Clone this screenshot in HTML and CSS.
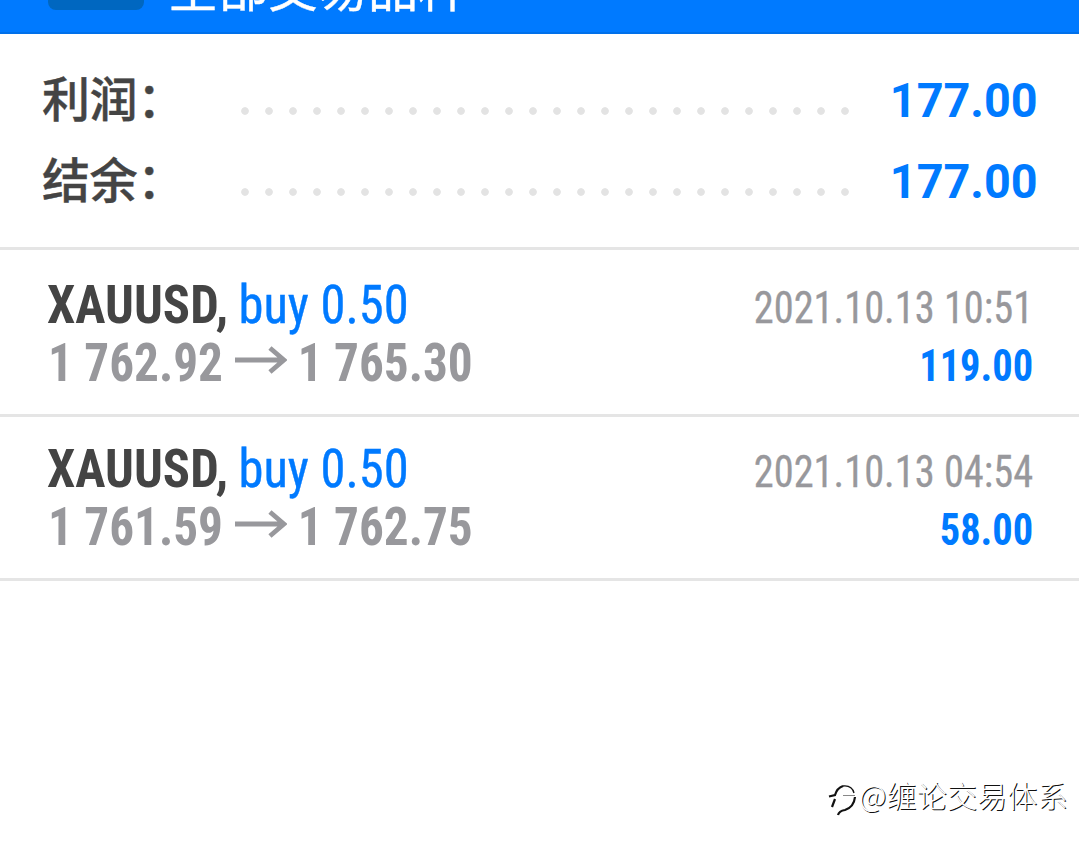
FILE: index.html
```
<!DOCTYPE html>
<html lang="zh-CN">
<head>
<meta charset="UTF-8">
<meta name="viewport" content="width=device-width, initial-scale=1.0">
<title>交易历史</title>
<link rel="stylesheet" href="styles.css">
</head>
<body>
<header class="header">
  <div class="header-icon"></div>
  <h1>全部交易品种</h1>
</header>

<section class="summary">
  <div class="summary-row">
    <span class="label">利润：</span>
    <span class="dots"></span>
    <span class="total">177.00</span>
  </div>
  <div class="summary-row">
    <span class="label">结余：</span>
    <span class="dots"></span>
    <span class="total">177.00</span>
  </div>
</section>

<main>
  <div class="deal">
    <div class="deal-info">
      <div class="line"><b class="symbol">XAUUSD,</b><span class="type">buy 0.50</span></div>
      <div class="line prices">
        <span>1 762.92</span>
        <svg class="arrow" width="57" height="28" viewBox="0 0 52 28" preserveAspectRatio="none"><path d="M0 14H49M35 2L49 14L35 26" fill="none" stroke="#98989c" stroke-width="4.8"/></svg>
        <span>1 765.30</span>
      </div>
    </div>
    <div class="deal-result">
      <span class="time">2021.10.13 10:51</span>
      <span class="profit">119.00</span>
    </div>
  </div>
  <div class="deal">
    <div class="deal-info">
      <div class="line"><b class="symbol">XAUUSD,</b><span class="type">buy 0.50</span></div>
      <div class="line prices">
        <span>1 761.59</span>
        <svg class="arrow" width="57" height="28" viewBox="0 0 52 28" preserveAspectRatio="none"><path d="M0 14H49M35 2L49 14L35 26" fill="none" stroke="#98989c" stroke-width="4.8"/></svg>
        <span>1 762.75</span>
      </div>
    </div>
    <div class="deal-result">
      <span class="time">2021.10.13 04:54</span>
      <span class="profit">58.00</span>
    </div>
  </div>
</main>

<div class="watermark">
  <svg width="31" height="40" viewBox="0 0 31 40">
    <g fill="none" stroke="#111" stroke-width="2.2">
      <path d="M1 19.500L7 18Q9 11 15 9"/>
      <path d="M15 9Q24 8 26 16" stroke-width="1.3"/>
      <path d="M15 18.500H27" stroke="#888" stroke-width="1"/>
      <path d="M27 20Q26 30 17 33Q11 34 10 38M7 22L4 30"/>
    </g>
  </svg>
  <span>@缠论交易体系</span>
</div>
</body>
</html>
```

FILE: styles.css
```
* {
  box-sizing: border-box;
}
body {
  margin: 0;
  height: 848px;
  overflow: hidden;
  background-color: #fff;
  font-family: Roboto, "Noto Sans CJK SC", sans-serif;
}
.header {
  display: flex;
  align-items: flex-end;
  height: 34px;
  padding-left: 48px;
  background-color: #007aff;
  border-bottom: 2px solid #0070ea;
}
.header-icon {
  width: 96px;
  height: 48px;
  margin-bottom: 22px;
  border-radius: 8px;
  background-color: #0067c0;
}
.header h1 {
  margin: 0 0 17px 24px;
  color: #fff;
  font-family: "Noto Sans CJK SC", sans-serif;
  font-size: 50px;
  font-weight: 400;
  line-height: 60px;
  -webkit-text-stroke: 0.4px #fff;
}
.summary {
  height: 216px;
  padding: 26px 42px 0;
  border-bottom: 3px solid #e5e5e5;
}
.summary-row {
  display: flex;
  align-items: center;
  height: 81px;
}
.label {
  width: 191px;
  margin-top: -9px;
  color: #444;
  font-family: "Noto Sans CJK SC", sans-serif;
  font-size: 48px;
  font-weight: 500;
  line-height: 81px;
  letter-spacing: -0.4px;
  -webkit-text-stroke: 0.4px #444;
}
.dots {
  width: 624px;
  height: 24px;
  margin-top: 21px;
  background: radial-gradient(circle, #e3e3e3 3.4px, transparent 4.2px) 0 0 / 24px 24px;
}
.total {
  margin: 0 -1px 0 auto;
  color: #007aff;
  font-size: 48px;
  font-weight: 700;
  transform: scaleX(0.975);
  transform-origin: right;
}
.deal {
  display: flex;
  justify-content: space-between;
  height: 167px;
  padding: 26px 46px 0 47px;
  border-bottom: 3px solid #e5e5e5;
  font-stretch: 75%;
}
.deal + .deal {
  height: 164px;
  padding-top: 23px;
}
/* the condensed face is squeezed a little further */
.line {
  display: flex;
  height: 58px;
  font-size: 54px;
  line-height: 58px;
  white-space: nowrap;
  transform: scaleX(0.937);
  transform-origin: left;
}
.symbol {
  color: #444;
}
.type {
  margin-left: 11px;
  color: #007aff;
  -webkit-text-stroke: 0.4px #007aff;
}
.prices {
  margin-left: 1px;
  color: #98989c;
  font-weight: 700;
  transform: scaleX(0.912);
}
.arrow {
  margin: 12px 12px 0 13px;
}
.deal-result {
  display: flex;
  flex-direction: column;
  align-items: flex-end;
  padding-top: 3px;
  font-size: 45px;
  line-height: 58px;
  transform: scaleX(0.898);
  transform-origin: right;
}
.time {
  color: #98989c;
  -webkit-text-stroke: 0.3px #98989c;
}
.profit {
  color: #007aff;
  font-weight: 700;
}
.watermark {
  position: absolute;
  left: 828px;
  top: 777px;
  display: flex;
  color: #fff;
  font-family: "Noto Sans CJK SC", sans-serif;
  font-size: 30px;
  font-weight: 300;
  line-height: 34px;
  letter-spacing: 0.2px;
  text-shadow: 1px 1px 0.5px #111;
}
```
